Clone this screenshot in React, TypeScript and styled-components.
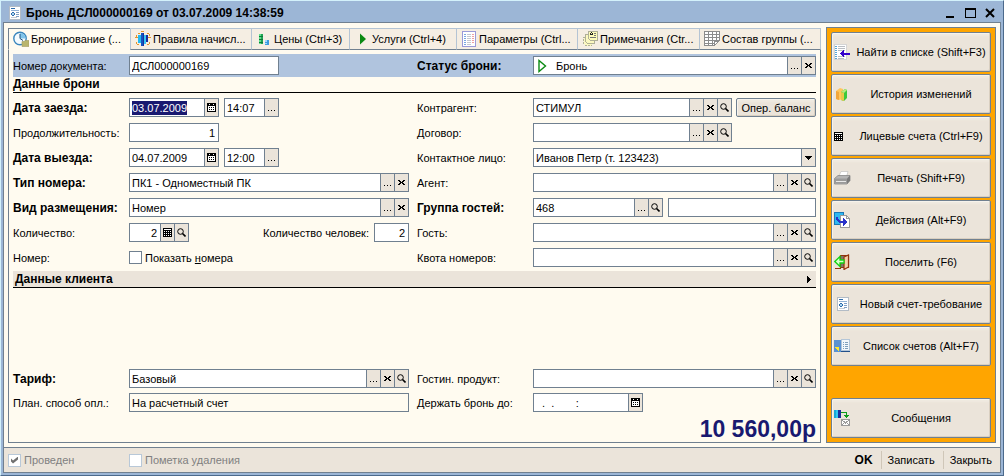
import React, { useEffect, useRef } from "react";
import styled, { createGlobalStyle, css } from "styled-components";

const slate = "#708090";
const face = "#ebe4da";
const cream = "#fffbf0";

const GlobalStyle = createGlobalStyle`
  *, *::before, *::after { box-sizing: border-box; }
  body { margin: 0; }
  body, button, input, select {
    font: 11px/14px "Liberation Sans", Arial, sans-serif;
    color: #000;
  }
  button { cursor: pointer; }
  svg { display: block; flex: none; }
  ::selection { background: #191970; color: #fff; }
`;

/* ---------- window ---------- */

const Window = styled.div`
  display: flex;
  flex-direction: column;
  min-height: 100vh;
  background: #9cb6d6;
  border: 1px solid #d3f1fb;
  border-right-color: #4c6a8c;
  border-bottom-color: #4c6a8c;
  padding: 0 2px 2px;
`;

const TitleBar = styled.header`
  display: flex;
  align-items: center;
  height: 21px;
  padding: 3px 1px 0 6px;
`;

const Title = styled.h1`
  flex: 1;
  margin: 0 0 0 5px;
  font-size: 12px;
  line-height: 16px;
`;

const WindowButton = styled.button`
  display: flex;
  align-items: center;
  justify-content: center;
  width: 20px;
  height: 16px;
  padding: 0;
  border: 0;
  background: none;
`;

const Frame = styled.div`
  flex: 1;
  display: flex;
  flex-direction: column;
  border: 1px solid ${slate};
  background: ${cream};
`;

const Workspace = styled.div`
  flex: 1;
  display: flex;
  gap: 5px;
  padding: 4px;
`;

/* ---------- tabs ---------- */

const Main = styled.main`
  flex: 1;
  min-width: 0;
  display: flex;
  flex-direction: column;
  padding-top: 1px;
`;

const TabList = styled.div`
  display: grid;
  grid-template-columns: 122fr 121fr 98fr 107fr 121fr 122fr 122fr;
  height: 22px;
`;

const Tab = styled.button<{ $active?: boolean }>`
  display: flex;
  align-items: center;
  gap: 2px;
  min-width: 0;
  padding: 0 0 0 4px;
  white-space: nowrap;
  border: 1px solid #b4c4d4;
  border-right: 0;
  border-bottom-color: ${slate};
  background: #f5eee3;
  &:last-child { border-right: 1px solid #b4c4d4; }
  ${(p) =>
    p.$active &&
    css`
      background: ${cream};
      border-color: ${slate};
      border-bottom-color: ${cream};
    `}
`;

const Panel = styled.section`
  flex: 1;
  display: flex;
  flex-direction: column;
  padding: 4px 4px 0;
  border: 1px solid ${slate};
  border-top: 0;
`;

/* ---------- form ---------- */

const Columns = styled.div<{ $band?: boolean; $tight?: boolean }>`
  display: grid;
  grid-template-columns: minmax(0, 396fr) minmax(0, 399fr);
  column-gap: 8px;
  row-gap: ${(p) => (p.$tight ? 5 : 6)}px;
  ${(p) =>
    p.$band &&
    css`
      padding: 2px 0;
      background: #b0c4de;
    `}
`;

const Row = styled.div`
  display: flex;
  align-items: center;
  height: 19px;
`;

const Label = styled.label<{ $strong?: boolean }>`
  flex: none;
  width: 116px;
  white-space: nowrap;
  ${(p) => p.$strong && "font-weight: bold; font-size: 12px;"}
`;

const SideLabel = styled.label`
  margin-left: auto;
  padding-right: 5px;
  white-space: nowrap;
`;

const SectionTitle = styled.h2`
  margin: 0 0 5px;
  height: 16px;
  border-bottom: 1px solid #000;
  font-size: 12px;
  line-height: 15px;
`;

const SectionToggle = styled.button`
  display: flex;
  align-items: center;
  justify-content: space-between;
  height: 17px;
  margin-top: 4px;
  padding: 0 5px 0 2px;
  border: 0;
  border-bottom: 1px solid #000;
  background: ${face};
  font-size: 12px;
  font-weight: bold;
`;

const Spacer = styled.div`
  flex: 1;
  min-height: 12px;
`;

const Box = styled.div<{ $w?: number; $readOnly?: boolean; $gap?: number }>`
  display: flex;
  height: 19px;
  min-width: 0;
  ${(p) => (p.$w ? `flex: none; width: ${p.$w}px;` : "flex: 1;")}
  margin-left: ${(p) => p.$gap || 0}px;
  border: 1px solid ${slate};
  background: ${(p) => (p.$readOnly ? cream : "#fff")};
`;

const TextInput = styled.input<{ $right?: boolean }>`
  flex: 1;
  width: 0;
  min-width: 0;
  padding: 0 3px 0 2px;
  border: 0;
  outline: 0;
  background: transparent;
  white-space: pre;
  text-align: ${(p) => (p.$right ? "right" : "left")};
`;

const FieldButton = styled.button`
  display: flex;
  align-items: center;
  justify-content: center;
  width: 14px;
  flex: none;
  padding: 0;
  border: 0;
  border-left: 1px solid ${slate};
  background: ${face};
`;

const StatusIcon = styled.span`
  display: flex;
  align-items: center;
  padding: 0 7px 0 4px;
`;

const SelectBox = styled(Box)`
  display: grid;
  grid-template-columns: 1fr 14px;
`;

const Select = styled.select`
  grid-area: 1 / 1 / 2 / 3;
  min-width: 0;
  padding: 0 16px 0 2px;
  border: 0;
  outline: 0;
  appearance: none;
  background: transparent;
`;

const SelectArrow = styled.span`
  grid-area: 1 / 2;
  display: flex;
  align-items: center;
  justify-content: center;
  border-left: 1px solid ${slate};
  background: ${face};
  pointer-events: none;
`;

const raised = css`
  border: 1px solid ${slate};
  border-radius: 2px;
  background: ${face};
  box-shadow: inset 1px 1px #f7f3ec, inset -1px -1px #d9cfc0, inset 0 3px 2px #f0eae1;
`;

const BalanceButton = styled.button`
  ${raised}
  flex: none;
  width: 80px;
  height: 19px;
  margin-left: 4px;
  padding: 0;
  white-space: nowrap;
`;

const BalanceGap = styled.span`
  flex: none;
  width: 84px;
`;

const CheckLabel = styled.label<{ $w?: number }>`
  display: flex;
  align-items: center;
  gap: 3px;
  white-space: nowrap;
  ${(p) => p.$w && `width: ${p.$w}px;`}
  &:has(:disabled) { color: #808080; }
`;

const Check = styled.input`
  appearance: none;
  display: grid;
  place-items: center;
  width: 13px;
  height: 13px;
  margin: 0;
  border: 1px solid ${slate};
  background: #fff;
  &:disabled { border-color: #b8c8d8; }
  &:checked::before {
    content: "";
    width: 7px;
    height: 7px;
    background: #707070;
    clip-path: polygon(0 29%, 29% 58%, 100% 0, 100% 42%, 29% 100%, 0 71%);
  }
`;

const Total = styled.output`
  margin-top: 4px;
  text-align: right;
  font-size: 23px;
  line-height: 26px;
  font-weight: bold;
  color: #191970;
`;

/* ---------- side panel ---------- */

const Sidebar = styled.aside`
  flex: none;
  display: flex;
  flex-direction: column;
  gap: 2px;
  width: 170px;
  padding: 4px;
  border: 1px solid ${slate};
  background: #ffa500;
`;

const Action = styled.button<{ $last?: boolean }>`
  ${raised}
  display: grid;
  grid-template-columns: 18px 1fr;
  align-items: center;
  height: 40px;
  padding: 0 0 0 2px;
  white-space: nowrap;
  ${(p) => p.$last && "margin-top: auto;"}
`;

/* ---------- footer ---------- */

const Footer = styled.footer`
  display: flex;
  align-items: center;
  height: 25px;
  padding: 0 0 0 4px;
  border-top: 1px solid ${slate};
  background: ${face};
`;

const Commands = styled.div`
  display: flex;
  margin-left: auto;
`;

const Command = styled.button<{ $strong?: boolean }>`
  height: 18px;
  padding: 0 8px 0 6px;
  border: 0;
  background: none;
  ${(p) => p.$strong && "font-weight: bold; font-size: 12px;"}
  & + & { border-left: 1px solid #cfc6b8; }
`;

/* ---------- icons ---------- */

type IconProps = { w: number; h: number; children: React.ReactNode; smooth?: boolean };

const Icon = ({ w, h, children, smooth }: IconProps) => (
  <svg width={w} height={h} viewBox={`0 0 ${w} ${h}`} fill="none" aria-hidden="true"
    shapeRendering={smooth ? "auto" : "crispEdges"}>
    {children}
  </svg>
);

const DocIcon = () => (
  <Icon w={12} h={14}>
    <path d="M.5 .5h11v13H.5z" fill="#fff" stroke="#b3bcc6" />
    <path d="M2 2.500h4" stroke="#2f6cab" />
    <path d="M2 4.500h8" stroke="#8fb0d4" />
    <path d="M7 6.500h3M7 8.500h3M7 10.500h3" stroke="#7f9fc4" />
    <path d="M3 6h2v1H3zM2 7h1v2H2zM5 7h1v2H5zM3 9h2v1H3z" fill="#2f6cab" />
    <path d="M3 7h2v2H3z" fill="#a8d4f0" />
    <path d="M2 11.500h6" stroke="#c4ccd4" />
  </Icon>
);

const ClockIcon = () => (
  <Icon w={16} h={16} smooth>
    <circle cx="7" cy="7.500" r="6.200" fill="#f4fbff" stroke="#3a86bd" strokeWidth="1.400" />
    <path d="M7 7.500V2a5.500 5.500 0 0 1 5.500 5.500z" fill="#7fc4ea" />
    <path d="M7 3v4.500l3 2" stroke="#20507c" />
    <path d="M9 10.500h2l1-1h4v6H9z" fill="#b9b56c" stroke="#a39b62" strokeWidth=".6" />
  </Icon>
);

const RulesIcon = () => (
  <Icon w={16} h={16}>
    <path d="M3 4h3v8H3z" fill="#22b8f0" />
    <path d="M6 2h2v13H6z" fill="#1554c0" />
    <path d="M8 2h1v13H8z" fill="#1a2f9c" />
    <path d="M9 4h2v9H9z" fill="#39c9f5" />
    <path d="M11 4h2v7h-2z" fill="#1a2f9c" />
    <path d="M3 2.500h2M1.500 4v2M12 2.500h2M14.500 3v2M1.500 11v2M2 13.500h2M12 13.500h2M14.500 11v2M0 6.500h3M13 6.500h3M6 .5h3" stroke="#e2952b" />
  </Icon>
);

const PricesIcon = () => (
  <Icon w={16} h={16}>
    <path d="M3 3h4v10H3z" fill="#22a355" />
    <path d="M3 3h2v10H3z" fill="#5fe08c" />
    <path d="M3 5.500h4M3 8.500h4M3 11.500h4" stroke="#0d7a3a" />
    <path d="M9 9h4v5H9z" fill="#3c9be0" />
    <path d="M9 9h2v2H9zM9 12h2v1H9z" fill="#9fd8ff" />
  </Icon>
);

const ServicesIcon = () => (
  <Icon w={16} h={16} smooth>
    <path d="M6 2.500v11l6-5.500z" fill="#0a8a12" />
  </Icon>
);

const ParamsIcon = () => (
  <Icon w={16} h={16}>
    <path d="M1.500 .5h13v15h-13z" fill="#fff" stroke="#9a9ad8" />
    <path d="M3 3.500h2M3 5.500h2M3 7.500h2M3 9.500h2M3 11.500h2M3 13.500h2" stroke="#7aa7e0" />
    <path d="M6 3.500h4M6 5.500h4M6 7.500h4M6 9.500h4M6 11.500h4M6 13.500h4" stroke="#c4c8d0" />
    <path d="M11 3.500h2M11 5.500h2M11 7.500h2M11 9.500h2M11 11.500h2" stroke="#f0a0a0" />
  </Icon>
);

const NotesIcon = () => (
  <Icon w={16} h={16}>
    <path d="M1.500 6.500h8v8h-6l-2-2z" fill="#fbf8c0" stroke="#b0b098" strokeDasharray="2 1" />
    <path d="M3.500 3.500h9v9h-7l-2-2z" fill="#fbf8c0" stroke="#b0b098" />
    <path d="M6.500 .5h9v9h-7l-2-2z" fill="#fdfbb8" stroke="#b0b098" />
    <path d="M8 2h1v2H8zM10 2h1v2h-1zM9 1h1v1H9zM9 3h1v1H9z" fill="#222" />
    <path d="M12 2.500h2M12 4.500h2M8 6.500h6" stroke="#777" />
  </Icon>
);

const GroupIcon = () => (
  <Icon w={16} h={16}>
    <path d="M.5 .5h15v9l-5 5H.5z" fill="#fff" stroke="#8c8c8c" />
    <path d="M0 3.500h15M0 6.500h15M0 9.500h15M0 12.500h11M4.500 0v15M8.500 0v15M12.500 0v11" stroke="#8c8c8c" />
    <path d="M10 10h5l-5 5z" fill="#fff" stroke="#8c8c8c" />
  </Icon>
);

const CalendarIcon = () => (
  <Icon w={9} h={9}>
    <path d="M0 0h9v9H0z" fill="#000" />
    <path d="M1 3h7v5H1zM2 1h1v1H2zM6 1h1v1H6z" fill="#fff" />
    <path d="M2 4h1v1H2zM4 4h1v1H4zM6 4h1v1H6zM2 6h1v1H2zM4 6h1v1H4zM6 6h1v1H6z" fill="#000" />
  </Icon>
);

const CalcIcon = () => (
  <Icon w={9} h={9}>
    <path d="M0 0h9v9H0z" fill="#000" />
    <path d="M1 1.500h7" stroke="#fff" />
    <path d="M1 3.500h7M1 5.500h7M1 7.500h7" stroke="#fff" strokeDasharray="1 1" />
  </Icon>
);

const DotsIcon = () => (
  <Icon w={9} h={9}>
    <path d="M1 7h1v1H1zM4 7h1v1H4zM7 7h1v1H7z" fill="#000" />
  </Icon>
);

const CrossIcon = () => (
  <Icon w={7} h={7}>
    <path d="M0 1h2v1H0zM5 1h2v1H5zM1 2h2v1H1zM4 2h2v1H4zM2 3h3v1H2zM1 4h2v1H1zM4 4h2v1H4zM0 5h2v1H0zM5 5h2v1H5z" fill="#000" />
  </Icon>
);

const LensIcon = () => (
  <Icon w={9} h={9} smooth>
    <circle cx="3.500" cy="3.500" r="2.800" stroke="#000" />
    <path d="M5.500 5.500L8.500 8.500" stroke="#000" strokeWidth="1.600" />
  </Icon>
);

const PlayOutline = () => (
  <Icon w={9} h={14} smooth>
    <path d="M1 1.500v11L7.500 7z" fill="#fff" stroke="#0a8a12" strokeWidth="1.400" />
  </Icon>
);

const DownIcon = () => (
  <Icon w={7} h={4}><path d="M0 0h7L3.500 4z" fill="#000" /></Icon>
);

const RightIcon = () => (
  <Icon w={4} h={7}><path d="M0 0v7L4 3.500z" fill="#000" /></Icon>
);

const FindIcon = () => (
  <Icon w={17} h={17}>
    <path d="M.5 .5h12v15H.5z" fill="#fff" stroke="#d5d5d5" />
    <path d="M1 2.500h2M1 4.500h2M1 6.500h2M1 8.500h2M1 10.500h2M1 12.500h2M1 14.500h2" stroke="#58a6d8" />
    <path d="M4 2.500h7M4 4.500h7M4 6.500h7M4 12.500h7M4 14.500h6" stroke="#b9bdc2" />
    <path d="M6 9.500l4-4v3h6v2h-6v3z" fill="#3300cc" />
  </Icon>
);

const HistoryIcon = () => (
  <Icon w={16} h={16} smooth>
    <path d="M2 5l4-3 3 1v10l-4 1-3-1z" fill="#ffc65c" />
    <path d="M2 5l3 1v8l-3-1z" fill="#f2a73b" />
    <path d="M7 6l4-3 2 1v8l-3 3-3-1z" fill="#3cc93c" />
    <path d="M7 6l3 1 3-3-2-1z" fill="#b8eb7a" />
    <path d="M7 6l3 1v8l-3-1z" fill="#e8c84a" />
  </Icon>
);

const PrinterIcon = () => (
  <Icon w={17} h={16} smooth>
    <path d="M5 6l2-4.500h7L12.500 7z" fill="#fff" stroke="#c2c2c2" strokeWidth=".7" />
    <path d="M.5 8.500L4 5.500h12v5L13 14H.5z" fill="#b5b5b5" stroke="#888" strokeWidth=".8" />
    <path d="M.5 8.500h12.500v5H.5z" fill="#9a9a9a" />
    <path d="M2 11.500h10" stroke="#e8e8e8" />
    <path d="M13 8.500l3-3v5L13 14z" fill="#7b7b7b" />
  </Icon>
);

const ActionsIcon = () => (
  <Icon w={17} h={17}>
    <path d="M.5 .5h9v12h-9z" fill="#30b8f0" stroke="#1979b8" />
    <path d="M6.500 3.500h6l3 3v9h-9z" fill="#fff" stroke="#9a9a9a" />
    <path d="M12.500 3.500v3h3" stroke="#9a9a9a" />
    <path d="M2 5h2v2l2 2h3V6l4 4-4 4v-3H5L2 8z" fill="#2a32c8" />
  </Icon>
);

const CheckInIcon = () => (
  <Icon w={17} h={16} smooth>
    <path d="M6.500 1.500h8v12h-8z" fill="#7a7a70" stroke="#93330c" strokeWidth="1.200" />
    <path d="M10 3l4.500-2v12L10 15.500z" fill="#f6d0a8" stroke="#93330c" strokeWidth="1.200" />
    <path d="M1 14.500h6" stroke="#93330c" />
    <path d="M.8 7.500L6 2.500V6h4v3H6v3.500z" fill="#d9ffd0" stroke="#14d214" strokeWidth="1.300" />
  </Icon>
);

const ListIcon = () => (
  <Icon w={17} h={14}>
    <path d="M0 1h8v12H0z" fill="#5a92d2" />
    <path d="M1 8h4v4H4l-3-3z" fill="#ffe92e" />
    <path d="M7.500 .5h8v11h-8z" fill="#f3f7fb" stroke="#b4c6d8" />
    <path d="M9 3.500h1M11 3.500h3M9 5.500h1M11 5.500h3M9 7.500h1M11 7.500h3M9 9.500h1M11 9.500h3" stroke="#7f9fbc" />
    <path d="M7 12.500h9" stroke="#23508a" />
  </Icon>
);

const MessagesIcon = () => (
  <Icon w={17} h={17}>
    <path d="M0 0h2v8H0z" fill="#18a8d8" />
    <path d="M2 0h2v8H2z" fill="#32c8f0" />
    <path d="M4 0h3v8H4z" fill="#1a2e9c" />
    <path d="M7 2.500h5.500V6" stroke="#0e9a1c" />
    <path d="M10 5h5v1h-1v1h-1v1h-1V7h-1V6h-1z" fill="#0e9a1c" />
    <path d="M7.500 9.500h8v6h-8z" fill="#fff" stroke="#9a9a9a" />
    <path d="M8 10l3.500 3L15 10M8 15l2-2M15 15l-2-2" stroke="#9a9a9a" />
  </Icon>
);

/* ---------- field helpers ---------- */

type Tool = "dots" | "clear" | "lens" | "calendar" | "calc";

const tools: Record<Tool, [React.FC, string]> = {
  dots: [DotsIcon, "Выбрать"],
  clear: [CrossIcon, "Очистить"],
  lens: [LensIcon, "Открыть"],
  calendar: [CalendarIcon, "Календарь"],
  calc: [CalcIcon, "Калькулятор"],
};

type FieldProps = {
  id?: string;
  name?: string;
  value?: string;
  w?: number;
  gap?: number;
  right?: boolean;
  readOnly?: boolean;
  buttons?: Tool[];
  lead?: React.ReactNode;
  inputRef?: React.Ref<HTMLInputElement>;
};

const Field = ({ id, name, value = "", w, gap, right, readOnly, buttons = [], lead, inputRef }: FieldProps) => (
  <Box $w={w} $gap={gap} $readOnly={readOnly}>
    {lead}
    <TextInput id={id} aria-label={name} ref={inputRef} defaultValue={value} $right={right} readOnly={readOnly} />
    {buttons.map((key) => {
      const [Glyph, title] = tools[key];
      return (
        <FieldButton key={key} type="button" aria-label={title}>
          <Glyph />
        </FieldButton>
      );
    })}
  </Box>
);

const tabs: [React.FC, string][] = [
  [ClockIcon, "Бронирование (..."],
  [RulesIcon, "Правила начисл..."],
  [PricesIcon, "Цены (Ctrl+3)"],
  [ServicesIcon, "Услуги (Ctrl+4)"],
  [ParamsIcon, "Параметры (Ctrl..."],
  [NotesIcon, "Примечания (Ctr..."],
  [GroupIcon, "Состав группы (..."],
];

const actions: [React.FC, string][] = [
  [FindIcon, "Найти в списке (Shift+F3)"],
  [HistoryIcon, "История изменений"],
  [CalcIcon, "Лицевые счета (Ctrl+F9)"],
  [PrinterIcon, "Печать (Shift+F9)"],
  [ActionsIcon, "Действия (Alt+F9)"],
  [CheckInIcon, "Поселить (F6)"],
  [DocIcon, "Новый счет-требование"],
  [ListIcon, "Список счетов (Alt+F7)"],
  [MessagesIcon, "Сообщения"],
];

const IconSlot = styled.span<{ $indent?: boolean }>`
  padding-left: ${(p) => (p.$indent ? 3 : 0)}px;
`;

export default function App() {
  const arrival = useRef<HTMLInputElement>(null);
  useEffect(() => {
    arrival.current?.focus();
    arrival.current?.select();
  }, []);

  return (
    <>
      <GlobalStyle />
      <Window>
        <TitleBar>
          <DocIcon />
          <Title>Бронь ДСЛ000000169 от 03.07.2009 14:38:59</Title>
          <WindowButton aria-label="Свернуть">
            <Icon w={10} h={10}><path d="M1 8h8v2H1z" fill="#000" /></Icon>
          </WindowButton>
          <WindowButton aria-label="Развернуть">
            <Icon w={11} h={10}><path d="M.5 .5h10v9H.5zM0 1.500h11" stroke="#000" /></Icon>
          </WindowButton>
          <WindowButton aria-label="Закрыть окно">
            <Icon w={10} h={10} smooth><path d="M1 1l8 8M9 1L1 9" stroke="#000" strokeWidth="2" /></Icon>
          </WindowButton>
        </TitleBar>

        <Frame>
          <Workspace>
            <Main>
              <TabList role="tablist">
                {tabs.map(([Glyph, text], i) => (
                  <Tab key={text} role="tab" aria-selected={i === 0} $active={i === 0}>
                    <Glyph />
                    {text}
                  </Tab>
                ))}
              </TabList>

              <Panel>
                <Columns $band>
                  <Row>
                    <Label htmlFor="number">Номер документа:</Label>
                    <Field id="number" w={150} value="ДСЛ000000169" />
                  </Row>
                  <Row>
                    <Label htmlFor="status" $strong>Статус брони:</Label>
                    <Field id="status" value="Бронь" buttons={["dots", "clear"]}
                      lead={<StatusIcon><PlayOutline /></StatusIcon>} />
                  </Row>
                </Columns>

                <SectionTitle>Данные брони</SectionTitle>

                <Columns>
                  <Row>
                    <Label htmlFor="arrival" $strong>Дата заезда:</Label>
                    <Field id="arrival" w={90} value="03.07.2009" buttons={["calendar"]} inputRef={arrival} />
                    <Field name="Время заезда" w={55} gap={5} value="14:07" buttons={["dots"]} />
                  </Row>
                  <Row>
                    <Label htmlFor="partner">Контрагент:</Label>
                    <Field id="partner" value="СТИМУЛ" buttons={["dots", "clear", "lens"]} />
                    <BalanceButton>Опер. баланс</BalanceButton>
                  </Row>

                  <Row>
                    <Label htmlFor="duration">Продолжительность:</Label>
                    <Field id="duration" w={90} value="1" right />
                  </Row>
                  <Row>
                    <Label htmlFor="contract">Договор:</Label>
                    <Field id="contract" buttons={["dots", "clear", "lens"]} />
                    <BalanceGap />
                  </Row>

                  <Row>
                    <Label htmlFor="departure" $strong>Дата выезда:</Label>
                    <Field id="departure" w={90} value="04.07.2009" buttons={["calendar"]} />
                    <Field name="Время выезда" w={55} gap={5} value="12:00" buttons={["dots"]} />
                  </Row>
                  <Row>
                    <Label htmlFor="contact">Контактное лицо:</Label>
                    <SelectBox>
                      <Select id="contact">
                        <option>Иванов Петр (т. 123423)</option>
                      </Select>
                      <SelectArrow><DownIcon /></SelectArrow>
                    </SelectBox>
                  </Row>

                  <Row>
                    <Label htmlFor="roomType" $strong>Тип номера:</Label>
                    <Field id="roomType" value="ПК1 - Одноместный ПК" buttons={["dots", "clear"]} />
                  </Row>
                  <Row>
                    <Label htmlFor="agent">Агент:</Label>
                    <Field id="agent" buttons={["dots", "clear", "lens"]} />
                  </Row>

                  <Row>
                    <Label htmlFor="placement" $strong>Вид размещения:</Label>
                    <Field id="placement" value="Номер" buttons={["dots", "clear"]} />
                  </Row>
                  <Row>
                    <Label htmlFor="group" $strong>Группа гостей:</Label>
                    <Field id="group" w={130} value="468" buttons={["dots", "lens"]} />
                    <Field name="Описание группы" gap={5} />
                  </Row>

                  <Row>
                    <Label htmlFor="count">Количество:</Label>
                    <Field id="count" w={60} value="2" right buttons={["calc", "lens"]} />
                    <SideLabel htmlFor="people">Количество человек:</SideLabel>
                    <Field id="people" w={35} value="2" right />
                  </Row>
                  <Row>
                    <Label htmlFor="guest">Гость:</Label>
                    <Field id="guest" buttons={["dots", "clear", "lens"]} />
                  </Row>

                  <Row>
                    <Label as="span">Номер:</Label>
                    <CheckLabel>
                      <Check type="checkbox" />
                      <span>Показать <u>н</u>омера</span>
                    </CheckLabel>
                  </Row>
                  <Row>
                    <Label htmlFor="quota">Квота номеров:</Label>
                    <Field id="quota" buttons={["dots", "clear", "lens"]} />
                  </Row>
                </Columns>

                <SectionToggle aria-expanded="false">
                  Данные клиента
                  <RightIcon />
                </SectionToggle>

                <Spacer />

                <Columns $tight>
                  <Row>
                    <Label htmlFor="tariff" $strong>Тариф:</Label>
                    <Field id="tariff" value="Базовый" buttons={["dots", "clear", "lens"]} />
                  </Row>
                  <Row>
                    <Label htmlFor="product">Гостин. продукт:</Label>
                    <Field id="product" buttons={["dots", "clear", "lens"]} />
                  </Row>
                  <Row>
                    <Label htmlFor="payment">План. способ опл.:</Label>
                    <Field id="payment" value="На расчетный счет" readOnly />
                  </Row>
                  <Row>
                    <Label htmlFor="hold">Держать бронь до:</Label>
                    <Field id="hold" w={110} value="  .  .       :" buttons={["calendar"]} />
                  </Row>
                </Columns>

                <Total>10 560,00р</Total>
              </Panel>
            </Main>

            <Sidebar>
              {actions.map(([Glyph, text], i) => (
                <Action key={text} $last={i === actions.length - 1}>
                  <IconSlot $indent={Glyph === DocIcon}><Glyph /></IconSlot>
                  <span>{text}</span>
                </Action>
              ))}
            </Sidebar>
          </Workspace>

          <Footer>
            <CheckLabel $w={121}>
              <Check type="checkbox" defaultChecked disabled />
              Проведен
            </CheckLabel>
            <CheckLabel>
              <Check type="checkbox" disabled />
              Пометка удаления
            </CheckLabel>
            <Commands>
              <Command $strong>OK</Command>
              <Command>Записать</Command>
              <Command>Закрыть</Command>
            </Commands>
          </Footer>
        </Frame>
      </Window>
    </>
  );
}
